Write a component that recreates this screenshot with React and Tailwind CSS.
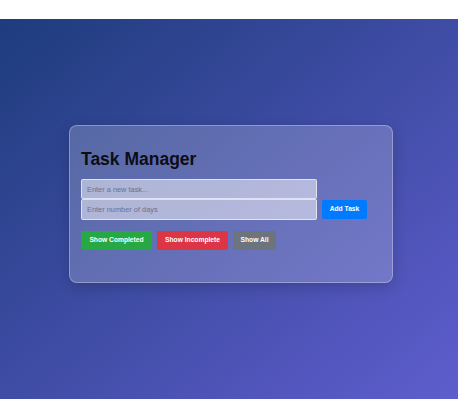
export default function App() {
  return (
    <div className="w-[458px] h-[420px] bg-white pt-[19px]" style={{ fontFamily: '"Liberation Sans", Arial, sans-serif' }}>
      <div className="h-[380px] bg-linear-to-br from-[#1d3c7d] to-[#5f5dce] pl-[69px] pt-[106px]">
        <div className="w-[324px] h-[158px] rounded-lg bg-white/20 border border-white/30 shadow-[0_4px_14px_rgba(0,0,0,0.18)] px-[11px] pt-[21px]">
          <h1 className="text-[17.5px] leading-[24px] font-bold text-[#0d0d14]">Task Manager</h1>
          <div className="mt-[8px] flex items-end gap-[5px]">
            <div className="flex flex-col w-[236px]">
              <input
                className="h-[20px] w-full rounded-[2px] border border-white/60 bg-white/50 px-[5px] text-[7.4px] text-[#333] placeholder:text-[#6b7090] outline-none"
                placeholder="Enter a new task..."
              />
              <input
                className="h-[21px] w-full rounded-[2px] border border-white/60 bg-white/50 px-[5px] text-[7.4px] text-[#333] placeholder:text-[#6b7090] outline-none"
                placeholder="Enter number of days"
              />
            </div>
            <button className="mb-[1px] h-[19px] w-[45px] rounded-[2px] bg-[#007bff] text-white text-[6.7px] font-bold flex items-center justify-center">
              Add Task
            </button>
          </div>
          <div className="mt-[11px] flex gap-[5px]">
            <button className="h-[19px] w-[71px] rounded-[2px] bg-[#28a745] text-white text-[6.7px] font-bold flex items-center justify-center">
              Show Completed
            </button>
            <button className="h-[19px] w-[71px] rounded-[2px] bg-[#dc3545] text-white text-[6.7px] font-bold flex items-center justify-center">
              Show Incomplete
            </button>
            <button className="h-[19px] w-[43px] rounded-[2px] bg-[#6c757d] text-white text-[6.7px] font-bold flex items-center justify-center">
              Show All
            </button>
          </div>
        </div>
      </div>
    </div>
  );
}
